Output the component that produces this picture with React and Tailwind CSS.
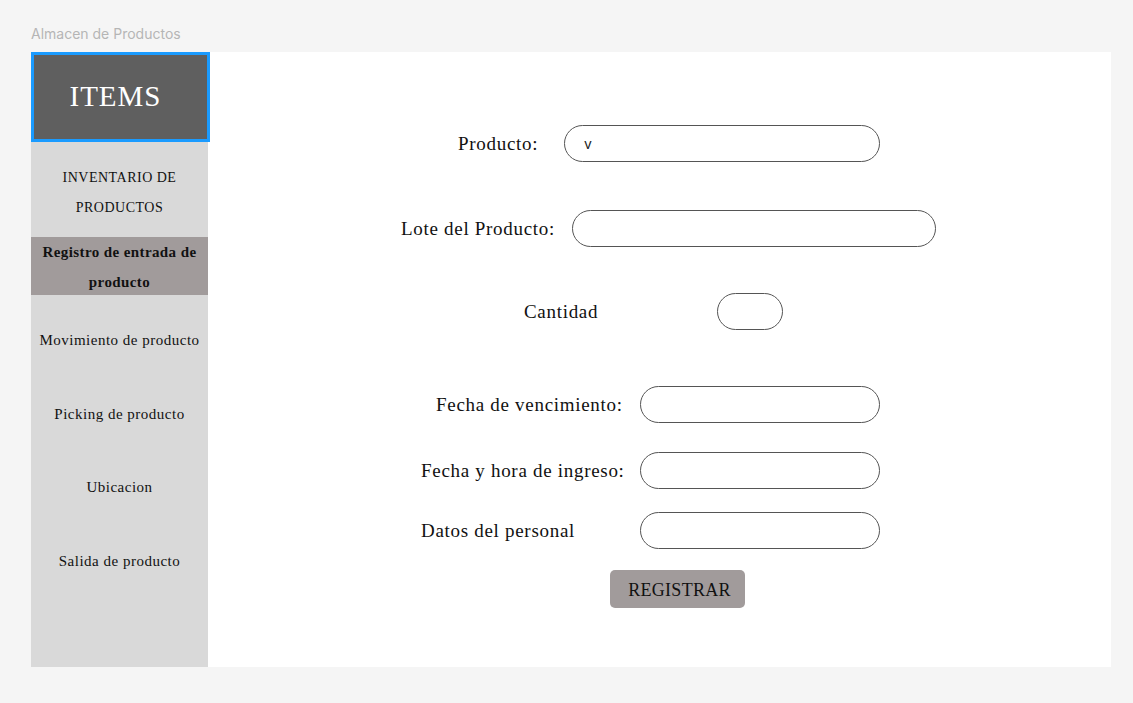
const serif = { fontFamily: '"Liberation Serif", "DejaVu Serif", serif' };

const navItems = [
  { label: 'Movimiento de producto', top: 'mt-[36px]' },
  { label: 'Picking de producto', top: 'mt-[56px]' },
  { label: 'Ubicacion', top: 'mt-[55px]' },
  { label: 'Salida de producto', top: 'mt-[56px]' },
];

function Field({ ml, labelW, inputW, mt, label, value }) {
  return (
    <div className={`flex items-center ${ml} ${mt}`}>
      <span className={`${labelW} shrink-0 text-[19px] tracking-[0.7px] text-[#111] pt-[2px]`}>{label}</span>
      <div
        className={`${inputW} h-[37px] shrink-0 rounded-full border border-[#555] bg-white flex items-center pl-[19px]`}
      >
        {value && (
          <span className="text-[14px] text-[#222]" style={{ fontFamily: 'Inter, sans-serif' }}>
            {value}
          </span>
        )}
      </div>
    </div>
  );
}

export default function App() {
  return (
    <div className="w-[1133px] h-[703px] bg-[#f5f5f5] overflow-hidden">
      <div
        className="h-[52px] pl-[31px] pt-[26px] text-[14px] leading-[16px] text-[#b5b5b5]"
        style={{ fontFamily: 'Inter, sans-serif' }}
      >
        Almacen de Productos
      </div>
      <div className="ml-[31px] w-[1080px] h-[615px] flex bg-white" style={serif}>
        <aside className="w-[177px] shrink-0 bg-[#d9d9d9] flex flex-col">
          <div className="w-[179px] h-[90px] bg-[#5f5f5f] border-[3px] border-[#1a9bff] flex items-center justify-center pr-[10px]">
            <span className="text-[29px] text-white tracking-[1px]">ITEMS</span>
          </div>
          <div className="mt-[21px] text-center text-[14px] tracking-[0.5px] leading-[30px] text-[#111]">
            INVENTARIO DE
            <br />
            PRODUCTOS
          </div>
          <div className="mt-[14px] h-[58px] bg-[#a19b9b] flex flex-col items-center justify-center text-[15px] tracking-[0.4px] leading-[30px] font-bold text-[#111] pt-[2px]">
            <span>Registro de entrada de</span>
            <span>producto</span>
          </div>
          {navItems.map((it) => (
            <div
              key={it.label}
              className={`${it.top} text-center text-[15px] tracking-[0.5px] leading-[18px] text-[#111]`}
            >
              {it.label}
            </div>
          ))}
        </aside>
        <main className="flex-1 flex flex-col pt-[73px]">
          <Field ml="ml-[250px]" labelW="w-[106px]" inputW="w-[316px]" label="Producto:" value="v" />
          <Field ml="ml-[193px]" labelW="w-[171px]" inputW="w-[364px]" mt="mt-[48px]" label="Lote del Producto:" />
          <Field ml="ml-[316px]" labelW="w-[193px]" inputW="w-[66px]" mt="mt-[46px]" label="Cantidad" />
          <Field ml="ml-[228px]" labelW="w-[204px]" inputW="w-[240px]" mt="mt-[56px]" label="Fecha de vencimiento:" />
          <Field ml="ml-[213px]" labelW="w-[219px]" inputW="w-[240px]" mt="mt-[29px]" label="Fecha y hora de ingreso:" />
          <Field ml="ml-[213px]" labelW="w-[219px]" inputW="w-[240px]" mt="mt-[23px]" label="Datos del personal" />
          <div className="ml-[402px] mt-[21px]">
            <button className="w-[135px] h-[38px] rounded-[5px] bg-[#a19b9b] text-[18px] tracking-[0.3px] text-[#111] flex items-center justify-center pt-[2px] pl-[4px]">
              REGISTRAR
            </button>
          </div>
        </main>
      </div>
    </div>
  );
}
